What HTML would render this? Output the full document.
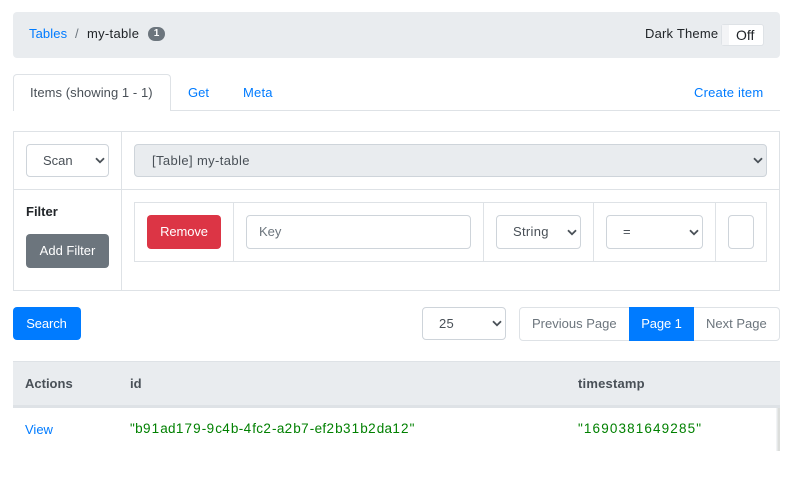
<!DOCTYPE html>
<html><head><meta charset="utf-8"><style>
html,body{margin:0;padding:0;background:#fff;width:791px;height:483px;overflow:hidden}
body{position:relative;font-family:"Liberation Sans",sans-serif;font-size:13px;color:#212529}
.a{position:absolute;box-sizing:border-box}
.t{position:absolute;white-space:nowrap;line-height:16px}
.f{position:absolute;box-sizing:border-box;border:1px solid #ced4da;border-radius:4px;background:#fff}
.l{position:absolute;background:#dee2e6}
.b{color:#007bff}
.g{color:#008000;font-size:13.5px;letter-spacing:.34px}
.g i{font-style:normal;letter-spacing:1.1px}
svg{position:absolute}
</style></head><body>
<div class="a" style="left:13px;top:12px;width:767px;height:46px;background:#e9ecef;border-radius:4px"></div>
<div class="t b" style="left:29px;top:26px;letter-spacing:.1px">Tables</div>
<div class="t" style="left:75px;top:26px;color:#6c757d">/</div>
<div class="t" style="left:87px;top:26px;letter-spacing:.3px">my-table</div>
<div class="a" style="left:148px;top:27px;width:17px;height:14px;border-radius:7px;background:#6c757d;color:#fff;font-size:10px;font-weight:bold;line-height:14px;text-align:center">1</div>
<div class="t" style="left:645px;top:26px;letter-spacing:.2px">Dark Theme</div>
<div class="a" style="left:721px;top:24px;width:43px;height:22px;background:#fff;border:1px solid #dee2e6;border-radius:3px"></div>
<div class="a" style="left:722px;top:25px;width:7px;height:20px;background:#f3f4f6"></div>
<div class="t" style="left:736px;top:27px;font-size:14px">Off</div>

<div class="l" style="left:13px;top:110px;width:767px;height:1px"></div>
<div class="a" style="left:13px;top:74px;width:158px;height:37px;background:#fff;border:1px solid #dee2e6;border-bottom:none;border-radius:4px 4px 0 0"></div>
<div class="t" style="left:30px;top:85px;color:#495057;letter-spacing:.06px">Items (showing 1 - 1)</div>
<div class="t b" style="left:188px;top:85px">Get</div>
<div class="t b" style="left:243px;top:85px;letter-spacing:.2px">Meta</div>
<div class="t b" style="left:694px;top:85px;letter-spacing:.2px">Create item</div>

<div class="a" style="left:13px;top:131px;width:767px;height:160px;border:1px solid #dee2e6"></div>
<div class="l" style="left:121px;top:131px;width:1px;height:160px"></div>
<div class="l" style="left:13px;top:189px;width:767px;height:1px"></div>

<div class="f" style="left:26px;top:144px;width:83px;height:33px"></div>
<div class="t" style="left:43px;top:153px;color:#495057">Scan</div>
<svg style="left:95px;top:157px" width="10" height="7" viewBox="0 0 10 7"><path d="M1 1.2L5 5.2L9 1.2" fill="none" stroke="#495057" stroke-width="1.8"/></svg>
<div class="f" style="left:134px;top:144px;width:633px;height:33px;background:#e9ecef"></div>
<div class="t" style="left:152px;top:153px;color:#495057;letter-spacing:.38px">[Table] my-table</div>
<svg style="left:753px;top:157px" width="10" height="7" viewBox="0 0 10 7"><path d="M1 1.2L5 5.2L9 1.2" fill="none" stroke="#495057" stroke-width="1.8"/></svg>

<div class="t" style="left:26px;top:204px;font-weight:bold">Filter</div>
<div class="a" style="left:26px;top:234px;width:83px;height:34px;background:#6c757d;border-radius:4px;color:#fff;text-align:center;line-height:33px">Add Filter</div>

<div class="a" style="left:134px;top:202px;width:633px;height:60px;border:1px solid #dee2e6"></div>
<div class="l" style="left:233px;top:202px;width:1px;height:60px"></div>
<div class="l" style="left:483px;top:202px;width:1px;height:60px"></div>
<div class="l" style="left:593px;top:202px;width:1px;height:60px"></div>
<div class="l" style="left:715px;top:202px;width:1px;height:60px"></div>
<div class="a" style="left:147px;top:215px;width:74px;height:34px;background:#dc3545;border-radius:4px;color:#fff;text-align:center;line-height:33px;letter-spacing:-.1px">Remove</div>
<div class="f" style="left:246px;top:215px;width:225px;height:34px"></div>
<div class="t" style="left:259px;top:224px;color:#6c757d">Key</div>
<div class="f" style="left:496px;top:215px;width:85px;height:34px"></div>
<div class="t" style="left:513px;top:224px;color:#495057;letter-spacing:.3px">String</div>
<svg style="left:567px;top:229px" width="10" height="7" viewBox="0 0 10 7"><path d="M1 1.2L5 5.2L9 1.2" fill="none" stroke="#495057" stroke-width="1.8"/></svg>
<div class="f" style="left:606px;top:215px;width:97px;height:34px"></div>
<div class="t" style="left:623px;top:224px;color:#495057">=</div>
<svg style="left:689px;top:229px" width="10" height="7" viewBox="0 0 10 7"><path d="M1 1.2L5 5.2L9 1.2" fill="none" stroke="#495057" stroke-width="1.8"/></svg>
<div class="f" style="left:728px;top:215px;width:26px;height:34px"></div>

<div class="a" style="left:13px;top:307px;width:68px;height:33px;background:#007bff;border-radius:4px;color:#fff;text-align:center;line-height:33px;letter-spacing:-.1px;padding-right:1px">Search</div>
<div class="f" style="left:422px;top:307px;width:84px;height:33px"></div>
<div class="t" style="left:439px;top:316px;color:#495057;letter-spacing:.3px">25</div>
<svg style="left:492px;top:320px" width="10" height="7" viewBox="0 0 10 7"><path d="M1 1.2L5 5.2L9 1.2" fill="none" stroke="#495057" stroke-width="1.8"/></svg>
<div class="a" style="left:519px;top:307px;width:261px;height:34px;border:1px solid #dee2e6;border-radius:4px"></div>
<div class="t" style="left:532px;top:316px;color:#6c757d">Previous Page</div>
<div class="a" style="left:629px;top:307px;width:65px;height:34px;background:#007bff;color:#fff;text-align:center;line-height:33px;letter-spacing:-.1px">Page 1</div>
<div class="t" style="left:706px;top:316px;color:#6c757d">Next Page</div>

<div class="a" style="left:13px;top:361px;width:767px;height:47px;background:#e9ecef;border-top:1px solid #dee2e6;border-bottom:3px solid #dee2e6"></div>
<div class="t" style="left:25px;top:376px;font-weight:bold;color:#495057">Actions</div>
<div class="t" style="left:130px;top:376px;font-weight:bold;color:#495057">id</div>
<div class="t" style="left:578px;top:376px;font-weight:bold;color:#495057;letter-spacing:.2px">timestamp</div>
<div class="t b" style="left:25px;top:422px">View</div>
<div class="t g" style="left:130px;top:421px">"b<i>91</i>ad<i>179</i>-<i>9</i>c<i>4</i>b-<i>4</i>fc<i>2</i>-a<i>2</i>b<i>7</i>-ef<i>2</i>b<i>31</i>b<i>2</i>da<i>12</i>"</div>
<div class="t g" style="left:578px;top:421px;letter-spacing:1.13px">"1690381649285"</div>
<div class="a" style="left:776px;top:408px;width:4px;height:43px;background:linear-gradient(90deg,#f1f3f5 0,#f1f3f5 35%,#dcdedc 35%,#dcdedc 100%)"></div>
</body></html>
